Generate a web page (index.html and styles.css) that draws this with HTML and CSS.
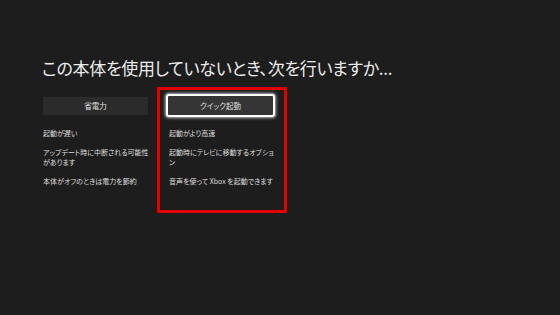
FILE: index.html
```html
<!DOCTYPE html>
<html lang="ja">
<head>
    <meta charset="UTF-8">
    <meta name="viewport" content="width=device-width, initial-scale=1.0">
    <title>電源モード</title>
    <link rel="stylesheet" href="styles.css">
</head>
<body>
    <div id="screen">
        <h1 class="question">この本体を使用していないとき、次を行いますか...</h1>
        <div class="options">
            <div class="option">
                <div class="btn-row">
                    <button class="mode-btn">省電力</button>
                </div>
                <ul class="features">
                    <li>起動が遅い</li>
                    <li>アップデート時に中断される可能性があります</li>
                    <li>本体がオフのときは電力を節約</li>
                </ul>
            </div>
            <div class="option selected">
                <div class="btn-row">
                    <button class="mode-btn focused">クイック起動</button>
                </div>
                <ul class="features">
                    <li>起動がより高速</li>
                    <li>起動時にテレビに移動するオプション</li>
                    <li>音声を使って Xbox を起動できます</li>
                </ul>
            </div>
        </div>
    </div>
</body>
</html>
```

FILE: styles.css
```css
body {
    margin: 0;
    background-color: #1d1d1d;
    font-family: "Noto Sans CJK JP", "Noto Sans", sans-serif;
    color: #e6e6e6;
    font-feature-settings: "palt";
}
#screen {
    width: 560px;
    height: 315px;
    padding: 55px 0 0 40px;
    box-sizing: border-box;
}
.question {
    margin: 0 0 0 2px;
    font-size: 17px;
    font-weight: normal;
    line-height: 26px;
    letter-spacing: -0.3px;
    color: #ececec;
}
.options {
    display: flex;
    margin-top: 6px;
}
.option {
    width: 117px;
    height: 126px;
    padding: 4px 0;
    border: 3px solid transparent;
    box-sizing: border-box;
}
.option.selected {
    width: 130px;
    border-color: #e50000;
    padding: 4px 9px 4px 6px;
}
.btn-row {
    height: 23px;
    display: flex;
    align-items: center;
}
.mode-btn {
    display: block;
    width: 105px;
    height: 18px;
    padding: 0;
    border: none;
    background-color: #2b2b2b;
    color: #e0e0e0;
    font-family: inherit;
    font-size: 7.5px;
    font-feature-settings: "palt";
}
.mode-btn.focused {
    width: 109px;
    height: 23px;
    background-color: #353535;
    border: 2px solid #ffffff;
    border-radius: 3px;
    box-shadow: 0 0 3px 1px rgba(255, 255, 255, 0.7);
}
.features {
    list-style: none;
    margin: 10.5px 0 0;
    padding: 0;
    font-size: 7px;
    line-height: 10px;
    color: #dedede;
}
.option .features {
    width: 108px;
}
.selected .features {
    width: auto;
    padding-left: 3px;
}
.features li {
    margin-bottom: 9px;
}
```
